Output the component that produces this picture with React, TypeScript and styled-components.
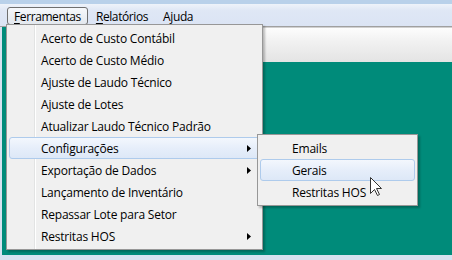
import styled, { createGlobalStyle } from "styled-components";

const GlobalStyle = createGlobalStyle`
  html, body {
    margin: 0;
    padding: 0;
    background: #d9e4f1;
  }
  body {
    font-family: "Open Sans", "Noto Sans", "DejaVu Sans", sans-serif;
    font-size: 12px;
    color: #000;
  }
`;

const Window = styled.div`
  position: relative;
  width: 452px;
  height: 260px;
  overflow: hidden;
  display: flex;
  flex-direction: column;
  background: #d6e2f0;
`;

const TitleStrip = styled.div`
  height: 4px;
  background: #b9d1ea;
`;

const MenuBar = styled.div`
  height: 19px;
  padding: 3px 0 0 7px;
  display: flex;
  align-items: flex-start;
  background: linear-gradient(#eef3fa 0, #dfe7f5 30%, #dbe4f4 100%);
  border-bottom: 1px solid #a0a0a0;
`;

const BarItem = styled.div<{ $open?: boolean }>`
  height: 16px;
  padding: 0 6px;
  display: flex;
  align-items: center;
  border: 1px solid ${(p) => (p.$open ? "#6f6f6f" : "transparent")};
  border-radius: 3px;
  background: ${(p) =>
    p.$open ? "linear-gradient(#f6f8fb, #e3e8ee)" : "transparent"};
  margin-right: 1px;
  white-space: nowrap;
  letter-spacing: -0.4px;

  u {
    text-decoration: underline;
    text-underline-offset: 2px;
  }
`;

const Body = styled.div`
  flex: 1;
  display: flex;
  flex-direction: column;
  margin: 0 0 5px 2px;
  background: #008b7a;
`;

const Toolbar = styled.div`
  height: 34px;
  margin-left: 5px;
  border-top: 1px solid #d0d0d0;
  background: linear-gradient(#fdfdfd, #f1f1f1 40%, #e4e4e4);
`;

const Menu = styled.div<{ $left: number; $top: number; $width: number; $gutter?: boolean }>`
  position: absolute;
  left: ${(p) => p.$left}px;
  top: ${(p) => p.$top}px;
  width: ${(p) => p.$width}px;
  box-sizing: border-box;
  padding: 2px;
  border: 1px solid #979797;
  background: ${(p) =>
    p.$gutter
      ? "linear-gradient(to right, #f0f0f0 0 27px, #e2e3e3 27px 28px, #ffffff 28px 29px, #f0f0f0 29px)"
      : "#f0f0f0"};
  box-shadow: 2px 2px 2px rgba(0, 0, 0, 0.25);
  display: flex;
  flex-direction: column;
`;

const Item = styled.div<{ $hot?: boolean }>`
  height: 22px;
  box-sizing: border-box;
  padding: 0 8px 0 31px;
  display: flex;
  align-items: center;
  justify-content: space-between;
  border: 1px solid ${(p) => (p.$hot ? "#aecbec" : "transparent")};
  border-radius: 3px;
  background: ${(p) =>
    p.$hot ? "linear-gradient(#f3f7fd, #e6eefa 50%, #dde8f7)" : "transparent"};
  white-space: nowrap;
  letter-spacing: -0.2px;
`;

const Arrow = () => (
  <svg width="4" height="7" viewBox="0 0 4 7">
    <polygon points="0,0 4,3.5 0,7" fill="#000" />
  </svg>
);

const Cursor = styled.svg`
  position: absolute;
  left: 370px;
  top: 177px;
`;

const mainItems: { label: string; sub?: boolean; hot?: boolean }[] = [
  { label: "Acerto de Custo Contábil" },
  { label: "Acerto de Custo Médio" },
  { label: "Ajuste de Laudo Técnico" },
  { label: "Ajuste de Lotes" },
  { label: "Atualizar Laudo Técnico Padrão" },
  { label: "Configurações", sub: true, hot: true },
  { label: "Exportação de Dados", sub: true },
  { label: "Lançamento de Inventário" },
  { label: "Repassar Lote para Setor" },
  { label: "Restritas HOS", sub: true },
];

const subItems = [
  { label: "Emails" },
  { label: "Gerais", hot: true },
  { label: "Restritas HOS" },
];

export default function App() {
  return (
    <>
      <GlobalStyle />
      <Window>
        <TitleStrip />
        <MenuBar>
          <BarItem $open>
            <span>
              <u>F</u>erramentas
            </span>
          </BarItem>
          <BarItem>
            <span>
              <u>R</u>elatórios
            </span>
          </BarItem>
          <BarItem>
            <span>Ajuda</span>
          </BarItem>
        </MenuBar>
        <Body>
          <Toolbar />
        </Body>

        <Menu $left={6} $top={24} $width={257} $gutter>
          {mainItems.map((it) => (
            <Item key={it.label} $hot={it.hot}>
              <span>{it.label}</span>
              {it.sub && <Arrow />}
            </Item>
          ))}
        </Menu>

        <Menu $left={257} $top={134} $width={161}>
          {subItems.map((it) => (
            <Item key={it.label} $hot={it.hot}>
              <span>{it.label}</span>
            </Item>
          ))}
        </Menu>

        <Cursor width="13" height="20" viewBox="0 0 13 20">
          <path
            d="M0.5 0.5 L0.5 16.5 L4.5 12.5 L7.5 18.5 L9.5 17.5 L6.5 11.5 L11.5 11.5 Z"
            fill="#fff"
            stroke="#333"
            strokeWidth="1"
            strokeLinejoin="miter"
          />
        </Cursor>
      </Window>
    </>
  );
}
